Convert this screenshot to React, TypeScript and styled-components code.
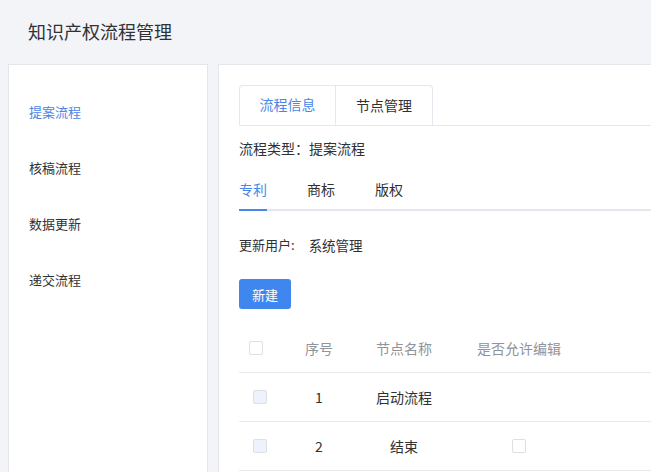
import React from "react";
import styled, { createGlobalStyle } from "styled-components";

const GlobalStyle = createGlobalStyle`
  html, body {
    margin: 0;
    padding: 0;
    background: #f3f4f8;
    overflow: hidden;
  }
  body {
    font-family: "Noto Sans CJK SC", "Liberation Sans", sans-serif;
    color: #303133;
  }
`;

const sideItems = ["提案流程", "核稿流程", "数据更新", "递交流程"];
const subTabs = ["专利", "商标", "版权"];

interface NodeRow {
  no: number;
  name: string;
  editable: boolean;
}

const rows: NodeRow[] = [
  { no: 1, name: "启动流程", editable: false },
  { no: 2, name: "结束", editable: true },
];

const App = () => {
  return (
    <>
      <GlobalStyle />
      <Page>
        <Header>知识产权流程管理</Header>
        <Content>
          <Sidebar>
            {sideItems.map((item, i) => (
              <SideItem key={item} active={i === 0}>
                {item}
              </SideItem>
            ))}
          </Sidebar>
          <Main>
            <CardTabs>
              <CardTab active>流程信息</CardTab>
              <CardTab>节点管理</CardTab>
            </CardTabs>
            <TypeLine>流程类型：提案流程</TypeLine>
            <SubTabs>
              {subTabs.map((t, i) => (
                <SubTab key={t} active={i === 0}>
                  {t}
                </SubTab>
              ))}
            </SubTabs>
            <UserLine>
              <UserLabel>更新用户:</UserLabel>
              <UserValue>系统管理</UserValue>
            </UserLine>
            <PrimaryButton>新建</PrimaryButton>
            <Table>
              <HeadRow>
                <CheckCell head>
                  <Check />
                </CheckCell>
                <Cell>序号</Cell>
                <Cell>节点名称</Cell>
                <Cell>是否允许编辑</Cell>
                <Cell />
              </HeadRow>
              {rows.map((r) => (
                <BodyRow key={r.no}>
                  <CheckCell>
                    <Check disabled />
                  </CheckCell>
                  <Cell>{r.no}</Cell>
                  <Cell>{r.name}</Cell>
                  <Cell>{r.editable && <Check />}</Cell>
                  <Cell />
                </BodyRow>
              ))}
            </Table>
          </Main>
        </Content>
      </Page>
    </>
  );
};

export default App;

const Page = styled.div`
  width: 100vw;
  height: 100vh;
  overflow: hidden;
  display: flex;
  flex-direction: column;
`;

const Header = styled.div`
  height: 64px;
  flex-shrink: 0;
  display: flex;
  align-items: center;
  padding-left: 28px;
  padding-bottom: 2px;
  box-sizing: border-box;
  font-size: 18px;
  color: #303133;
`;

const Content = styled.div`
  display: flex;
  gap: 10px;
  padding-left: 8px;
  min-height: 520px;
  margin-right: -40px;
`;

const Sidebar = styled.div`
  width: 200px;
  flex-shrink: 0;
  box-sizing: border-box;
  background: #ffffff;
  border: 1px solid #e4e6ec;
  padding-top: 19px;
`;

const SideItem = styled.div<{ active?: boolean }>`
  height: 56px;
  line-height: 56px;
  padding-left: 20px;
  font-size: 13px;
  color: ${(p) => (p.active ? "#4a86e8" : "#303133")};
`;

const Main = styled.div`
  flex: 1;
  box-sizing: border-box;
  background: #ffffff;
  border: 1px solid #e4e6ec;
  padding: 20px 0 0 20px;
`;

const CardTabs = styled.div`
  display: flex;
  border-bottom: 1px solid #e4e7ed;
  height: 40px;
`;

const CardTab = styled.div<{ active?: boolean }>`
  width: 97px;
  height: 40px;
  box-sizing: border-box;
  display: flex;
  align-items: center;
  justify-content: center;
  font-size: 14px;
  border: 1px solid #e4e7ed;
  border-bottom: ${(p) => (p.active ? "1px solid #ffffff" : "none")};
  border-left: ${(p) => (p.active ? "1px solid #e4e7ed" : "none")};
  border-radius: ${(p) => (p.active ? "4px 0 0 0" : "0 4px 0 0")};
  color: ${(p) => (p.active ? "#4a86e8" : "#303133")};
  margin-bottom: -1px;
  padding-bottom: 2px;
`;

const TypeLine = styled.div`
  margin-top: 12px;
  font-size: 14px;
  line-height: 20px;
  color: #303133;
`;

const SubTabs = styled.div`
  margin-top: 13px;
  display: flex;
  gap: 40px;
  border-bottom: 2px solid #e4e7ed;
`;

const SubTab = styled.div<{ active?: boolean }>`
  height: 38px;
  line-height: 37px;
  font-size: 14px;
  color: ${(p) => (p.active ? "#4a86e8" : "#303133")};
  box-shadow: ${(p) => (p.active ? "0 2px 0 #4a86e8" : "none")};
`;

const UserLine = styled.div`
  margin-top: 24px;
  display: flex;
  gap: 14px;
  font-size: 13px;
  line-height: 20px;
  color: #303133;
`;

const UserLabel = styled.span``;

const UserValue = styled.span`
  font-size: 13.5px;
`;

const PrimaryButton = styled.button`
  margin-top: 24px;
  display: block;
  width: 52px;
  height: 30px;
  padding: 0;
  border: none;
  border-radius: 3px;
  background: #3f87ee;
  color: #ffffff;
  font-family: inherit;
  font-size: 13px;
`;

const Table = styled.div`
  margin-top: 15px;
`;

const gridCols = "41px 78px 92px 138px 1fr";

const HeadRow = styled.div`
  display: grid;
  grid-template-columns: ${gridCols};
  height: 48px;
  border-bottom: 1px solid #e8eaf0;
  color: #909399;
  font-size: 14px;
  align-items: center;
`;

const BodyRow = styled(HeadRow)`
  color: #303133;
`;

const Cell = styled.div`
  display: flex;
  justify-content: center;
  align-items: center;
`;

const CheckCell = styled(Cell)<{ head?: boolean }>`
  justify-content: ${(p) => (p.head ? "flex-start" : "center")};
  padding-left: ${(p) => (p.head ? "10px" : "0")};
`;

const Check = styled.span<{ disabled?: boolean }>`
  display: inline-block;
  width: 14px;
  height: 14px;
  box-sizing: border-box;
  border: 1px solid #dcdfe6;
  border-radius: 2px;
  background: ${(p) => (p.disabled ? "#edf2fc" : "#ffffff")};
`;
